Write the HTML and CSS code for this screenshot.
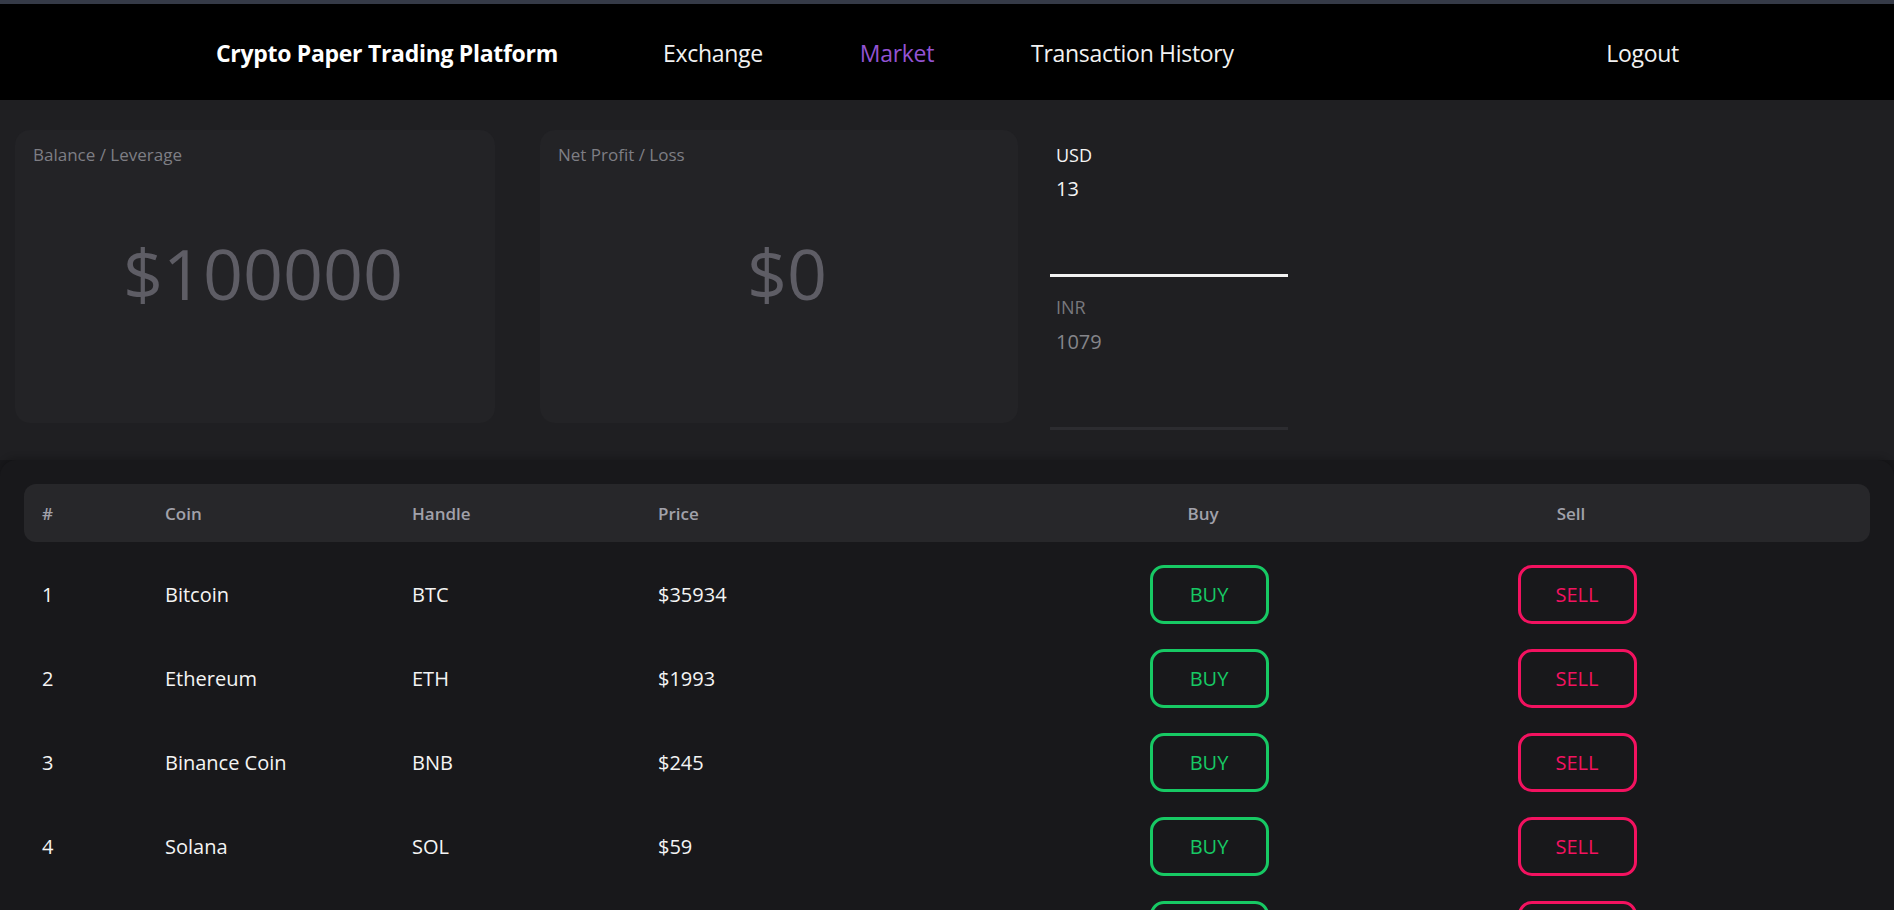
FILE: index.html
```html
<!DOCTYPE html>
<html lang="en">
<head>
<meta charset="utf-8">
<title>Crypto Paper Trading Platform</title>
<link rel="stylesheet" href="styles.css">
</head>
<body>
<div class="topstrip"></div>
<nav class="nav">
  <div class="brand">Crypto Paper Trading Platform</div>
  <div class="links">
    <a class="link">Exchange</a>
    <a class="link active">Market</a>
    <a class="link">Transaction History</a>
  </div>
  <a class="link logout">Logout</a>
</nav>

<section class="stats">
  <div class="card card-balance">
    <div class="card-label">Balance / Leverage</div>
    <div class="card-value">$100000</div>
  </div>
  <div class="card card-pnl">
    <div class="card-label">Net Profit / Loss</div>
    <div class="card-value">$0</div>
  </div>
  <div class="currency-tabs">
    <div class="ctab active">
      <div class="ctab-label">USD</div>
      <div class="ctab-value">13</div>
    </div>
    <div class="ctab">
      <div class="ctab-label">INR</div>
      <div class="ctab-value">1079</div>
    </div>
  </div>
</section>

<section class="panel">
  <div class="trow thead">
    <div class="cell">#</div>
    <div class="cell">Coin</div>
    <div class="cell">Handle</div>
    <div class="cell">Price</div>
    <div class="cell center">Buy</div>
    <div class="cell center">Sell</div>
  </div>
  <div class="tbody">
    <div class="trow">
      <div class="cell">1</div><div class="cell">Bitcoin</div><div class="cell">BTC</div><div class="cell">$35934</div>
      <div class="cell center"><button class="btn buy">BUY</button></div>
      <div class="cell center"><button class="btn sell">SELL</button></div>
    </div>
    <div class="trow">
      <div class="cell">2</div><div class="cell">Ethereum</div><div class="cell">ETH</div><div class="cell">$1993</div>
      <div class="cell center"><button class="btn buy">BUY</button></div>
      <div class="cell center"><button class="btn sell">SELL</button></div>
    </div>
    <div class="trow">
      <div class="cell">3</div><div class="cell">Binance Coin</div><div class="cell">BNB</div><div class="cell">$245</div>
      <div class="cell center"><button class="btn buy">BUY</button></div>
      <div class="cell center"><button class="btn sell">SELL</button></div>
    </div>
    <div class="trow">
      <div class="cell">4</div><div class="cell">Solana</div><div class="cell">SOL</div><div class="cell">$59</div>
      <div class="cell center"><button class="btn buy">BUY</button></div>
      <div class="cell center"><button class="btn sell">SELL</button></div>
    </div>
    <div class="trow">
      <div class="cell">5</div><div class="cell">XRP</div><div class="cell">XRP</div><div class="cell">$0.6</div>
      <div class="cell center"><button class="btn buy">BUY</button></div>
      <div class="cell center"><button class="btn sell">SELL</button></div>
    </div>
  </div>
</section>
</body>
</html>
```

FILE: styles.css
```css
* { box-sizing: border-box; }
html, body { margin: 0; padding: 0; }
body {
  background: #18181b;
  color: #ececec;
  font-family: "Open Sans", "Noto Sans", sans-serif;
  overflow: hidden;
}

.topstrip { height: 4px; background: #353a47; }

.nav {
  height: 96px;
  background: #000;
  display: flex;
  align-items: center;
  padding: 2px 215px 0 216px;
}
.brand {
  font-weight: 700;
  font-size: 23px;
  color: #fff;
  letter-spacing: -0.3px;
}
.links {
  display: flex;
  gap: 97px;
  margin-left: 105px;
}
.link {
  font-size: 23px;
  color: #f2f2f2;
  letter-spacing: -0.3px;
  text-decoration: none;
  cursor: pointer;
}
.link.active { color: #9353d3; }
.logout { margin-left: auto; }

.stats {
  background: #1f1f22;
  display: flex;
  align-items: flex-start;
  padding: 30px 15px 30px 15px;
  height: 360px;
}
.card {
  background: #232326;
  border-radius: 15px;
  height: 293px;
  padding: 13px 18px;
  display: flex;
  flex-direction: column;
}
.card-balance { width: 480px; }
.card-pnl { width: 478px; margin-left: 45px; }
.card-label {
  font-size: 17px;
  line-height: 24px;
  color: #7e7e84;
}
.card-value {
  margin-top: 58px;
  line-height: 96px;
  font-size: 70px;
  color: #5e5d65;
  text-align: center;
  padding-left: 16px;
}

.currency-tabs {
  width: 238px;
  margin-left: 32px;
  display: flex;
  flex-direction: column;
}
.ctab {
  height: 147px;
  padding: 13px 6px 0;
  border-bottom: 3px solid #2c2c30;
}
.ctab.active { border-bottom-color: #f2f2f2; }
.ctab + .ctab { height: 153px; padding-top: 18px; }
.ctab-label { font-size: 18px; line-height: 24px; color: #78787d; }
.ctab-value { font-size: 20px; line-height: 26px; margin-top: 9px; color: #85858a; }
.ctab + .ctab .ctab-value { margin-top: 10px; }
.ctab.active .ctab-label, .ctab.active .ctab-value { color: #f4f4f4; }

.panel {
  background: #18181b;
  border-radius: 16px 16px 0 0;
  padding: 24px 24px 0;
  box-shadow: 0 -3px 6px rgba(0,0,0,0.18);
}
.trow {
  display: grid;
  grid-template-columns: 123px 247px 246px 494px 150px 1fr;
  align-items: center;
  height: 84px;
}
.cell { padding-left: 18px; font-size: 20px; color: #f4f4f4; }
.cell.center { padding-left: 0; text-align: center; display: flex; justify-content: center; }
.thead {
  height: 58px;
  background: #27272a;
  border-radius: 12px;
}
.thead .cell { font-size: 17px; font-weight: 600; color: #a1a1aa; }
.thead .cell.center { position: relative; left: -6px; }
.tbody { padding-top: 10px; }

.btn {
  width: 119px;
  height: 59px;
  border-radius: 14px;
  background: transparent;
  border: 3px solid;
  font-family: inherit;
  font-size: 20px;
  cursor: pointer;
}
.btn.buy { border-color: #17c964; color: #17c964; }
.btn.sell { border-color: #f31260; color: #f31260; }
```
